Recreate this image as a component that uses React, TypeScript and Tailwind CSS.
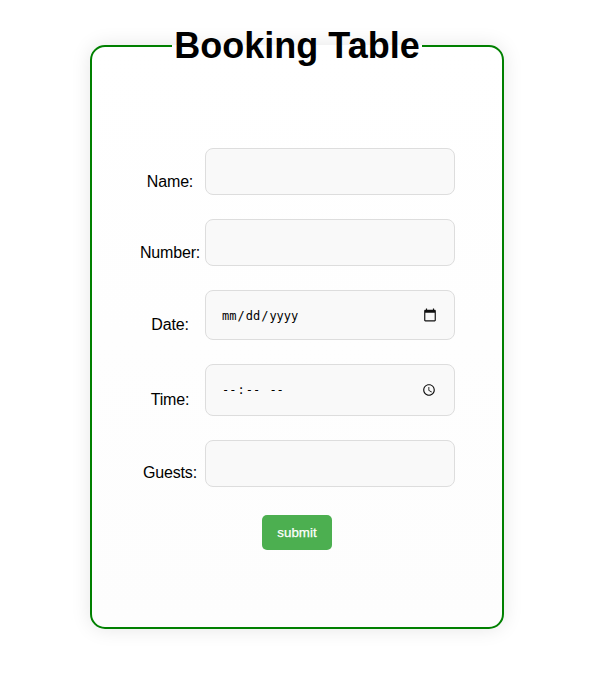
import type { ReactNode } from "react";

type RowProps = { label: string; row: string; labelPad: string; children?: ReactNode };

function Row({ label, row, labelPad, children }: RowProps) {
  return (
    <div className={"flex " + row}>
      <label className={"mr-[4px] w-[62px] shrink-0 text-center text-[16px] leading-[18px] tracking-[-0.01em] whitespace-nowrap " + labelPad}>
        {label}
      </label>
      <div className="flex h-full w-[250px] items-center justify-between rounded-lg border border-[#dddddd] bg-[#f9f9f9] pr-[17px] pl-[15px]">
        {children}
      </div>
    </div>
  );
}

function Mask({ parts, pad }: { parts: string[]; pad: string }) {
  return (
    <span className={"flex font-['DejaVu_Sans_Mono',monospace] text-[12px] leading-[15px] whitespace-pre " + pad}>
      {parts.map((part, i) => (
        <span key={i} className={i % 2 === 0 ? "px-px" : ""}>{part}</span>
      ))}
    </span>
  );
}

export default function App() {
  return (
    <div className="flex h-[696px] w-[605px] flex-col overflow-hidden bg-white pt-[25px] pl-[90px] font-['Liberation_Sans',Arial,sans-serif] text-black">
      <fieldset className="h-[604px] w-[414px] rounded-[15px] border-2 border-[#008000] bg-linear-to-b from-white to-[#fdfdfd] shadow-[0_0_20px_rgba(0,0,0,0.1)]">
        <legend className="mx-auto h-[42px] w-[250px] text-center text-[36px] leading-[42px] font-bold whitespace-nowrap">
          Booking Table
        </legend>
        <div className="flex flex-col gap-[24px] pt-[81px] pl-[47px]">
          <Row label="Name:" row="h-[47px]" labelPad="pt-[25px]" />
          <Row label="Number:" row="h-[47px]" labelPad="pt-[25px]" />
          <Row label="Date:" row="h-[50px]" labelPad="pt-[26px]">
            <Mask parts={["mm", "/", "dd", "/", "yyyy"]} pad="pt-[2px]" />
            <svg viewBox="0 0 24 24" className="mb-px size-[14px]" fill="#101010">
              <path d="M20 3h-1V1h-2v2H7V1H5v2H4c-1.1 0-2 .9-2 2v16c0 1.1.9 2 2 2h16c1.1 0 2-.9 2-2V5c0-1.1-.9-2-2-2zm0 18H4V8h16v13z" />
            </svg>
          </Row>
          <Row label="Time:" row="h-[52px]" labelPad="pt-[27px]">
            <Mask parts={["--", ":", "--", " ", "--"]} pad="pt-px" />
            <svg viewBox="0 0 24 24" className="mr-px mb-px size-[14px]" fill="#101010">
              <path d="M12 2C6.5 2 2 6.5 2 12s4.5 10 10 10 10-4.500 10-10S17.500 2 12 2zm0 18c-4.420 0-8-3.580-8-8s3.580-8 8-8 8 3.580 8 8-3.580 8-8 8zM12.500 7H11v6l5.250 3.150.75-1.230-4.500-2.670z" />
            </svg>
          </Row>
          <Row label="Guests:" row="h-[47px]" labelPad="pt-[24px]" />
        </div>
        <button className="mx-auto mt-[28px] block h-[35px] w-[70px] rounded-[5px] bg-[#4caf50] text-[13.333px] text-white [-webkit-text-stroke:0.25px_white]">
          submit
        </button>
      </fieldset>
    </div>
  );
}
